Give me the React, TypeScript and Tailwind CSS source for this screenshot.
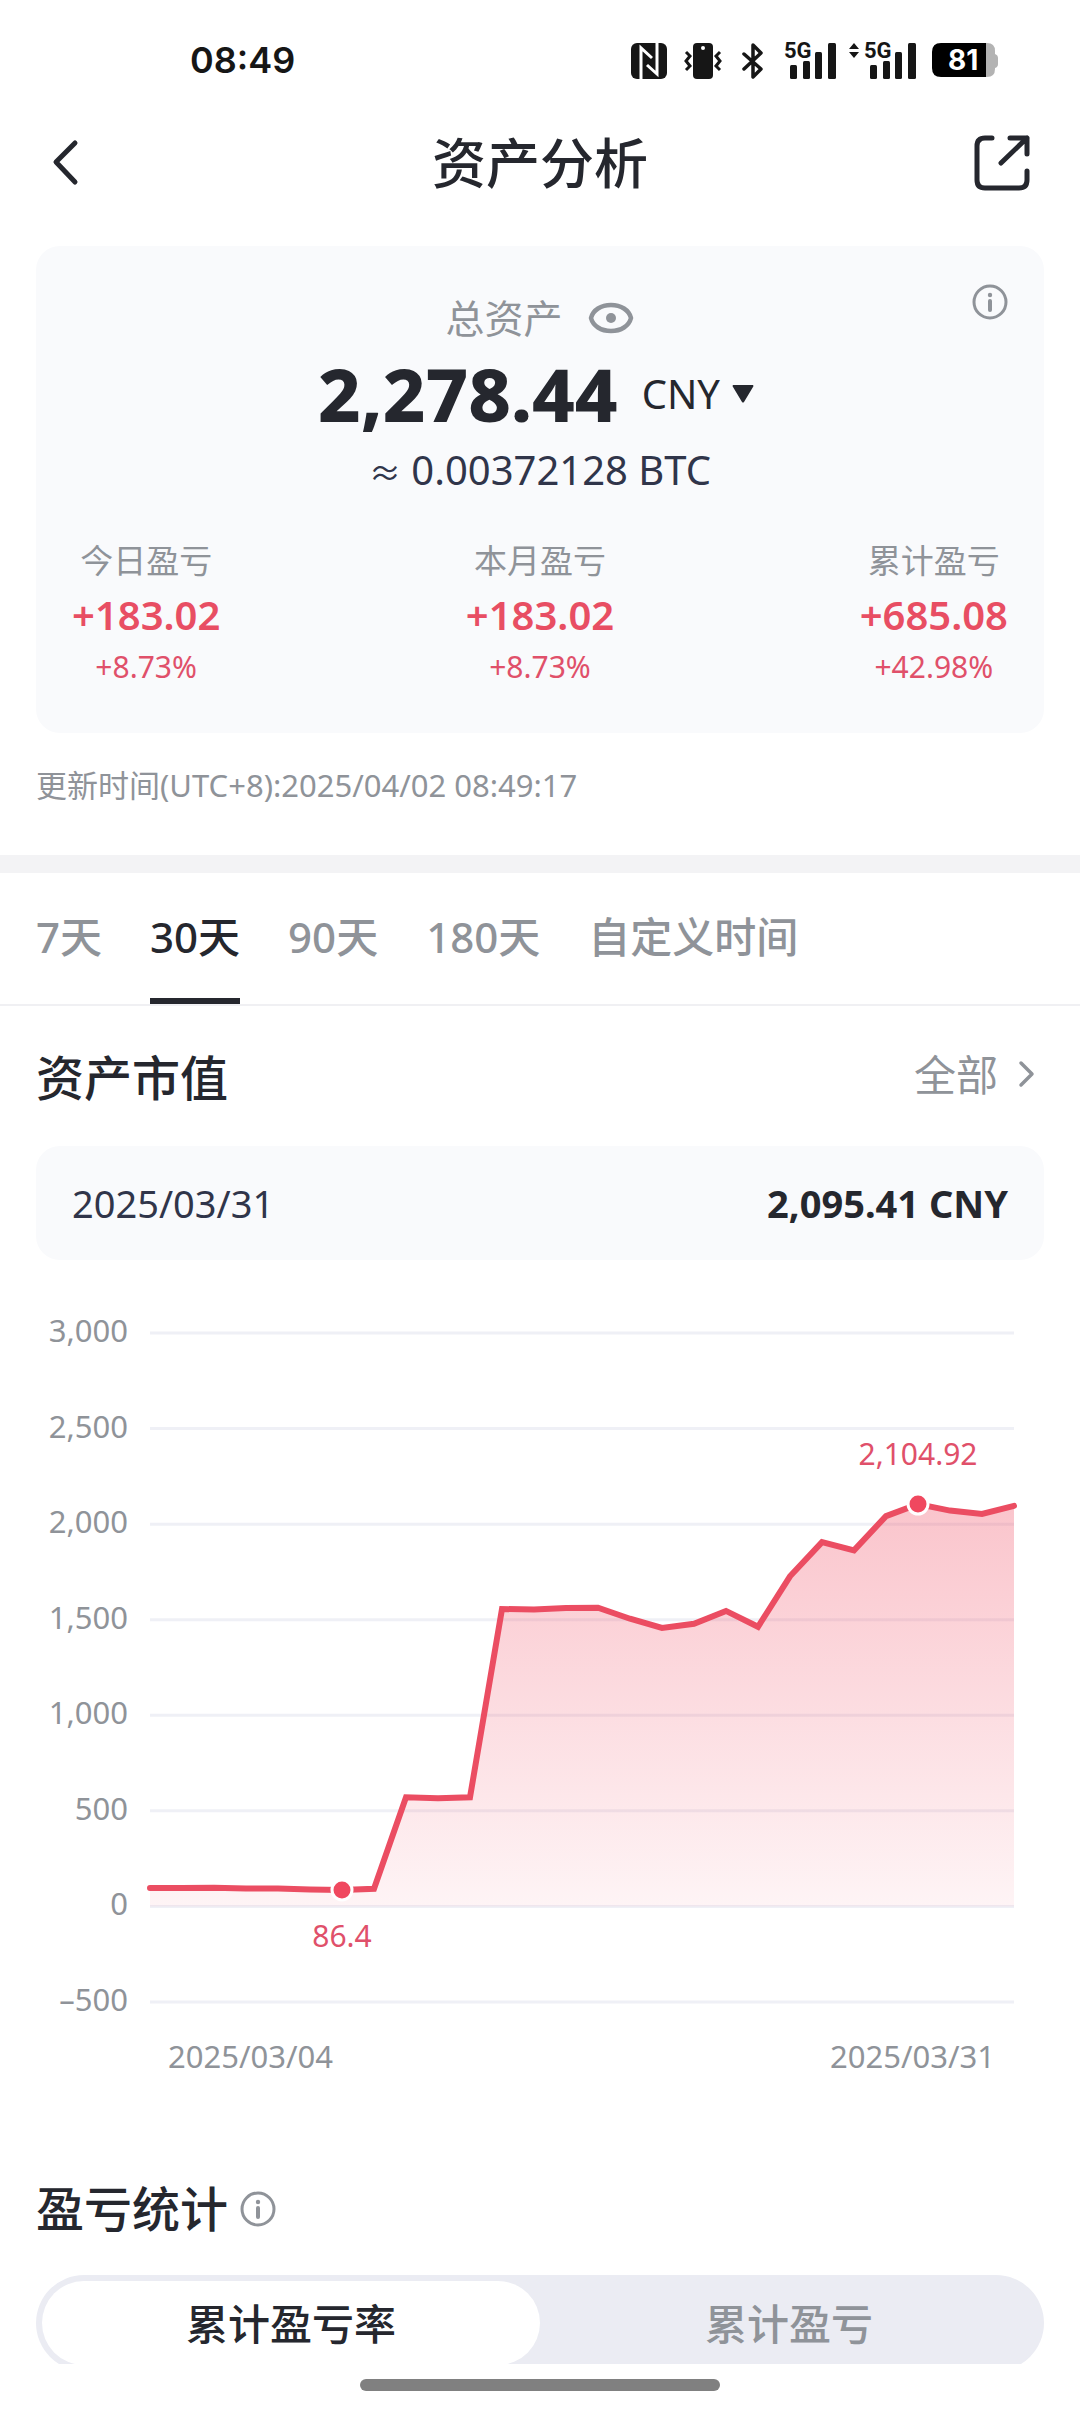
import React, { useState } from 'react';

interface Stat {
  label: string;
  value: string;
  percent: string;
}

const stats: Stat[] = [
  { label: '今日盈亏', value: '+183.02', percent: '+8.73%' },
  { label: '本月盈亏', value: '+183.02', percent: '+8.73%' },
  { label: '累计盈亏', value: '+685.08', percent: '+42.98%' },
];

const ranges = ['7天', '30天', '90天', '180天', '自定义时间'];

// One value per day, 2025/03/04 - 2025/03/31
const values = [
  96, 96, 98, 94, 94, 89, 86.4, 92, 571, 566, 571, 1556, 1553, 1561, 1563, 1505, 1457, 1479,
  1546, 1463, 1727, 1906, 1863, 2042, 2104.92, 2071, 2053, 2095.41,
];

const ticks = [3000, 2500, 2000, 1500, 1000, 500, 0, -500];

const CHART = { left: 114, right: 978, top: 43, bottom: 712, max: 3000, min: -500 };

const xAt = (i: number) => CHART.left + (i * (CHART.right - CHART.left)) / (values.length - 1);
const yAt = (v: number) =>
  CHART.top + ((CHART.max - v) * (CHART.bottom - CHART.top)) / (CHART.max - CHART.min);

const InfoIcon: React.FC = () => (
  <svg viewBox="0 0 36 36" className="w-9 h-9" fill="none" stroke="#8f9399" strokeWidth="3">
    <circle cx="18" cy="18" r="16" />
    <path d="M18 17v9" strokeWidth="4" strokeLinecap="round" />
    <circle cx="18" cy="11" r="2.2" fill="#8f9399" stroke="none" />
  </svg>
);

const SignalBars: React.FC = () => (
  <svg viewBox="0 0 52 40" className="w-[52px] h-10 overflow-visible" fill="#161616">
    <text x="0" y="18" fontSize="22" fontWeight="700" fontFamily="Roboto, sans-serif">5G</text>
    <rect x="6" y="25" width="7" height="14" rx="1.5" />
    <rect x="19" y="21" width="7" height="18" rx="1.5" />
    <rect x="31" y="12" width="7" height="27" rx="1.5" />
    <rect x="44" y="3" width="8" height="36" rx="1.5" />
  </svg>
);

const StatusBar: React.FC = () => (
  <div className="flex h-[120px] shrink-0 items-center justify-between pl-[190px] pr-[82px] text-[#161616]">
    <span className="font-['Inter',sans-serif] text-[36px] font-semibold">08:49</span>
    <div className="flex items-center">
      <svg viewBox="0 0 38 40" className="w-[38px] h-10">
        <rect x="1" y="3" width="36" height="36" rx="6" fill="#161616" />
        <path d="M11 39V8l11 10M27 3v31L17 25" fill="none" stroke="#fff" strokeWidth="3" />
      </svg>
      <svg viewBox="0 0 38 40" className="ml-4 w-[38px] h-10">
        <rect x="9" y="3" width="20" height="36" rx="4" fill="#161616" />
        <circle cx="19" cy="8" r="2" fill="#fff" />
        <path d="M2 12l4 4-4 5 4 5-4 4M36 12l-4 4 4 5-4 5 4 4" fill="none" stroke="#161616" strokeWidth="3" />
      </svg>
      <svg viewBox="0 0 22 40" className="ml-5 w-[22px] h-10" fill="none" stroke="#161616" strokeWidth="3.5">
        <path d="M2 14l17 15-8 8V5l8 8L2 29" strokeLinecap="round" strokeLinejoin="round" />
      </svg>
      <div className="ml-5"><SignalBars /></div>
      <svg viewBox="0 0 12 40" className="ml-3 w-3 h-10" fill="#161616">
        <path d="M6 3l5 6H1zM6 18l5-6H1z" />
      </svg>
      <div className="ml-1"><SignalBars /></div>
      <div className="relative ml-4 flex items-center">
        <svg viewBox="0 0 66 36" className="w-[66px] h-9">
          <path d="M54 1h1q8 0 8 8v3q3 1 3 4v6q0 3-3 4v1q0 8-8 8h-1z" fill="#b3b3b3" />
          <path d="M9 1h45v34H9q-9 0-9-9V10q0-9 9-9z" fill="#000" />
        </svg>
        <span className="absolute left-4 font-['Inter',sans-serif] text-[28px] leading-9 font-bold text-white">81</span>
      </div>
    </div>
  </div>
);

const AssetChart: React.FC = () => {
  const line = values.map((v, i) => `${xAt(i)},${yAt(v)}`).join(' ');
  const area = `${CHART.left},${yAt(0)} ${line} ${CHART.right},${yAt(0)}`;
  const lowX = xAt(6);
  const highX = xAt(24);

  return (
    <svg viewBox="0 0 1008 800" className="mt-[30px] block w-full" fontSize="31" role="img" aria-label="资产市值">
      <defs>
        <linearGradient id="area" x1="0" y1="0" x2="0" y2="1">
          <stop offset="0" stopColor="#f0485f" stopOpacity="0.32" />
          <stop offset="1" stopColor="#f0485f" stopOpacity="0.06" />
        </linearGradient>
      </defs>
      {ticks.map((t) => (
        <g key={t}>
          <line x1={CHART.left} x2={CHART.right} y1={yAt(t)} y2={yAt(t)} stroke="#eff0f6" strokeWidth="3" />
          <text x="92" y={yAt(t) + 9} textAnchor="end" fill="#8f9399">
            {t < 0 ? `–${-t}` : t.toLocaleString('en-US')}
          </text>
        </g>
      ))}
      <polygon points={area} fill="url(#area)" />
      <polyline points={line} fill="none" stroke="#eb4d62" strokeWidth="6" strokeLinecap="round" />
      <circle cx={lowX} cy={yAt(86.4)} r="10" fill="#f0485f" stroke="#fff" strokeWidth="3" />
      <circle cx={highX} cy={yAt(2104.92)} r="10" fill="#f0485f" stroke="#fff" strokeWidth="3" />
      <text x={lowX} y="657" fontSize="30" textAnchor="middle" fill="#e0506a">86.4</text>
      <text x={highX} y="175" fontSize="30" textAnchor="middle" fill="#e0506a">2,104.92</text>
      <text x="132" y="778" fill="#8f9399">2025/03/04</text>
      <text x="959" y="778" textAnchor="end" fill="#8f9399">2025/03/31</text>
    </svg>
  );
};

export default function App() {
  const [range, setRange] = useState('30天');
  const [mode, setMode] = useState('累计盈亏率');

  return (
    <div lang="zh-CN" className="flex h-screen flex-col bg-white font-['Noto_Sans','Noto_Sans_CJK_SC',sans-serif] text-[#25272e]">
      <StatusBar />

      <header className="flex h-[86px] shrink-0 items-center justify-between px-12">
        <button aria-label="返回" className="w-[60px]">
          <svg viewBox="0 0 36 54" className="w-9 h-[54px]" fill="none" stroke="#25272e" strokeWidth="5" strokeLinecap="round" strokeLinejoin="round">
            <path d="M27 7L8 26l19 20" />
          </svg>
        </button>
        <h1 className="text-[54px] leading-[72px] font-medium">资产分析</h1>
        <button aria-label="分享" className="w-[60px]">
          <svg viewBox="0 0 60 60" className="w-[60px] h-[60px]" fill="none" stroke="#25272e" strokeWidth="5" strokeLinecap="round" strokeLinejoin="round">
            <path d="M20 5h-7q-8 0-8 8v34q0 8 8 8h34q8 0 8-8v-9M38 5h17v16M55 5L29 30" />
          </svg>
        </button>
      </header>

      <main className="min-h-0 flex-1 overflow-hidden">
        <section className="relative mx-9 mt-10 rounded-3xl bg-[#f9fafc] px-9 pt-11 pb-11">
          <button aria-label="说明" className="absolute top-[38px] right-9">
            <InfoIcon />
          </button>
          <div className="flex h-14 items-center justify-center gap-6 text-[39px] text-[#8f9399]">
            <span>总资产</span>
            <button aria-label="隐藏金额">
              <svg viewBox="0 0 48 36" className="w-12 h-9" fill="none" stroke="#8f9399" strokeWidth="4.5">
                <path d="M4 18C6 10 14 5 24 5S42 10 44 18C42 26 34 31 24 31S6 26 4 18Z" strokeLinejoin="round" />
                <circle cx="24" cy="18" r="5" fill="#8f9399" stroke="none" />
              </svg>
            </button>
          </div>
          <div className="flex h-24 items-center justify-center gap-6 pr-2">
            <strong className="text-[74px] leading-[96px] font-extrabold">2,278.44</strong>
            <button className="flex items-center gap-3 text-[40px]">
              CNY
              <svg viewBox="0 0 22 18" className="w-[22px] h-[18px]" fill="#25272e">
                <path d="M1 0h20q1 1 0 2L12 17q-1 1-2 0L1 2Q0 1 1 0z" />
              </svg>
            </button>
          </div>
          <p className="mt-1 text-center text-[40px] leading-[48px] text-[#30354a]">
            <span className="text-[32px]">≈</span> 0.00372128 BTC
          </p>
          <dl className="mt-10 flex justify-between text-center">
            {stats.map((s) => (
              <div key={s.label}>
                <dt className="text-[33px] leading-[48px] text-[#8f9399]">{s.label}</dt>
                <dd className="mt-1 text-[40px] leading-[52px] font-semibold text-[#e84e63]">{s.value}</dd>
                <dd className="mt-1 text-[30px] leading-[44px] text-[#e0506a]">{s.percent}</dd>
              </div>
            ))}
          </dl>
        </section>

        <p className="mt-8 px-9 text-[31px] leading-10 text-[#8f9399]">更新时间(UTC+8):2025/04/02 08:49:17</p>
        <div className="mt-[50px] h-[18px] bg-[#f3f3f5]" />

        <nav className="flex gap-12 border-b-2 border-[#f0f0f3] px-9">
          {ranges.map((r) => (
            <button
              key={r}
              onClick={() => setRange(r)}
              className={`relative h-[131px] pb-1 text-[42px] font-medium ${r === range ? 'text-[#25272e]' : 'text-[#8f9399]'}`}
            >
              {r}
              {r === range && <span className="absolute inset-x-0 bottom-0 h-1.5 bg-[#25272e]" />}
            </button>
          ))}
        </nav>

        <section className="mt-8 px-9">
          <div className="flex h-20 items-center justify-between">
            <h2 className="text-[48px] font-medium">资产市值</h2>
            <button className="flex items-center gap-4 pb-2 text-[42px] text-[#8f9399]">
              全部
              <svg viewBox="0 0 30 30" className="w-[30px] h-[30px]" fill="none" stroke="#8f9399" strokeWidth="3.5" strokeLinecap="round" strokeLinejoin="round">
                <path d="M7 4l11 11L7 26" />
              </svg>
            </button>
          </div>
          <div className="mt-7 flex h-[114px] items-center justify-between rounded-3xl bg-[#f9fafc] px-9 text-[38px]">
            <span className="text-[#30354a]">2025/03/31</span>
            <strong className="font-bold">2,095.41 CNY</strong>
          </div>
          <AssetChart />
        </section>

        <section className="mt-[87px] px-9">
          <div className="flex h-16 items-center gap-3">
            <h2 className="text-[48px] font-medium">盈亏统计</h2>
            <button aria-label="说明">
              <InfoIcon />
            </button>
          </div>
          <div className="mt-[34px] grid h-24 grid-cols-2 rounded-full bg-[#ebecf3] p-1.5 text-[42px] font-medium">
            {['累计盈亏率', '累计盈亏'].map((m) => (
              <button
                key={m}
                onClick={() => setMode(m)}
                className={`rounded-full ${m === mode ? 'bg-white text-[#25272e]' : 'text-[#8f9399]'}`}
              >
                {m}
              </button>
            ))}
          </div>
        </section>
      </main>

      <footer className="flex h-12 shrink-0 justify-center pt-[15px]">
        <div className="h-3 w-1/3 rounded-full bg-[#808080]" />
      </footer>
    </div>
  );
}
